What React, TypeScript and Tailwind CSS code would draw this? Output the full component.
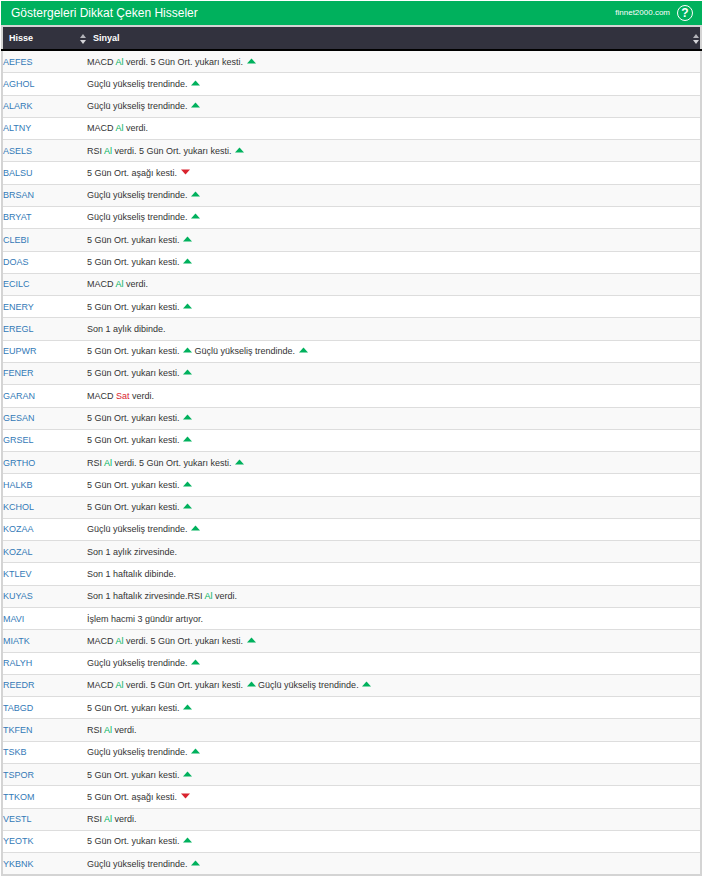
type Part = string | { al: string } | { sat: string } | 'up' | 'down';

const UP_5: Part[] = ['5 Gün Ort. yukarı kesti. ', 'up'];
const TREND: Part[] = ['Güçlü yükseliş trendinde. ', 'up'];
const MACD_AL: Part[] = ['MACD ', { al: 'Al' }, ' verdi.'];
const RSI_AL: Part[] = ['RSI ', { al: 'Al' }, ' verdi.'];

const rows: [string, Part[]][] = [
  ['AEFES', ['MACD ', { al: 'Al' }, ' verdi. 5 Gün Ort. yukarı kesti. ', 'up']],
  ['AGHOL', TREND],
  ['ALARK', TREND],
  ['ALTNY', MACD_AL],
  ['ASELS', ['RSI ', { al: 'Al' }, ' verdi. 5 Gün Ort. yukarı kesti. ', 'up']],
  ['BALSU', ['5 Gün Ort. aşağı kesti. ', 'down']],
  ['BRSAN', TREND],
  ['BRYAT', TREND],
  ['CLEBI', UP_5],
  ['DOAS', UP_5],
  ['ECILC', MACD_AL],
  ['ENERY', UP_5],
  ['EREGL', ['Son 1 aylık dibinde.']],
  ['EUPWR', ['5 Gün Ort. yukarı kesti. ', 'up', ' Güçlü yükseliş trendinde. ', 'up']],
  ['FENER', UP_5],
  ['GARAN', ['MACD ', { sat: 'Sat' }, ' verdi.']],
  ['GESAN', UP_5],
  ['GRSEL', UP_5],
  ['GRTHO', ['RSI ', { al: 'Al' }, ' verdi. 5 Gün Ort. yukarı kesti. ', 'up']],
  ['HALKB', UP_5],
  ['KCHOL', UP_5],
  ['KOZAA', TREND],
  ['KOZAL', ['Son 1 aylık zirvesinde.']],
  ['KTLEV', ['Son 1 haftalık dibinde.']],
  ['KUYAS', ['Son 1 haftalık zirvesinde.RSI ', { al: 'Al' }, ' verdi.']],
  ['MAVI', ['İşlem hacmi 3 gündür artıyor.']],
  ['MIATK', ['MACD ', { al: 'Al' }, ' verdi. 5 Gün Ort. yukarı kesti. ', 'up']],
  ['RALYH', TREND],
  ['REEDR', ['MACD ', { al: 'Al' }, ' verdi. 5 Gün Ort. yukarı kesti. ', 'up', ' Güçlü yükseliş trendinde. ', 'up']],
  ['TABGD', UP_5],
  ['TKFEN', RSI_AL],
  ['TSKB', TREND],
  ['TSPOR', UP_5],
  ['TTKOM', ['5 Gün Ort. aşağı kesti. ', 'down']],
  ['VESTL', RSI_AL],
  ['YEOTK', UP_5],
  ['YKBNK', TREND],
];

function Arrow({ down }: { down?: boolean }) {
  return (
    <svg width="9" height="6" viewBox="0 0 9 6" className="inline-block align-[1px] ml-[1px]">
      {down ? <path d="M0 0.5h9L4.5 5.5z" fill="#d9232e" /> : <path d="M0 5.5h9L4.5 0.5z" fill="#00b15d" />}
    </svg>
  );
}

function SortIcon() {
  return (
    <svg width="6" height="10" viewBox="0 0 6 10" className="block">
      <path d="M3 0l3 4H0z" fill="#b4b4ba" />
      <path d="M3 10L0 6h6z" fill="#d6d6da" />
    </svg>
  );
}

function Signal({ parts }: { parts: Part[] }) {
  return (
    <>
      {parts.map((p, i) => {
        if (p === 'up') return <Arrow key={i} />;
        if (p === 'down') return <Arrow key={i} down />;
        if (typeof p === 'string') return <span key={i}>{p}</span>;
        if ('al' in p) return <span key={i} className="text-[#00b15d]">{p.al}</span>;
        return <span key={i} className="text-[#d9232e]">{p.sat}</span>;
      })}
    </>
  );
}

export default function App() {
  return (
    <div className="w-[703px] h-[878px] overflow-hidden bg-white pt-px pl-px pr-px font-['Liberation_Sans',Arial,sans-serif]">
      {/* Title bar */}
      <div className="h-[24px] bg-[#00b15d] flex items-center pl-[10px] pr-[9px] text-white">
        <span className="text-[12px]">Göstergeleri Dikkat Çeken Hisseler</span>
        <span className="ml-auto text-[8px] mr-[7px]">finnet2000.com</span>
        <span className="w-[16px] h-[16px] rounded-full border-[1.5px] border-white flex items-center justify-center text-[12px] font-bold">?</span>
      </div>

      <table className="w-full border-collapse table-fixed text-[9px] leading-[14.28px] border-2 border-[#d4d4d4]">
        <thead>
          <tr className="bg-[#32323e] text-white border-b-2 border-black">
            <th className="w-[83px] h-[24px] text-left font-bold pl-[6px] relative">
              Hisse
              <span className="absolute right-[-1px] top-[7px]"><SortIcon /></span>
            </th>
            <th className="text-left font-bold pl-[8px] relative">
              Sinyal
              <span className="absolute right-[1px] top-[7px]"><SortIcon /></span>
            </th>
          </tr>
        </thead>
        <tbody>
          {rows.map(([code, parts], i) => (
            <tr key={code} className={`border-b border-[#ddd] ${i % 2 === 0 ? 'bg-[#f9f9f9]' : 'bg-white'}`}>
              <td className="py-[3.5px] text-[#337ab7]">{code}</td>
              <td className="pl-[2px] py-[3.5px] text-[#333]"><Signal parts={parts} /></td>
            </tr>
          ))}
        </tbody>
      </table>
    </div>
  );
}
